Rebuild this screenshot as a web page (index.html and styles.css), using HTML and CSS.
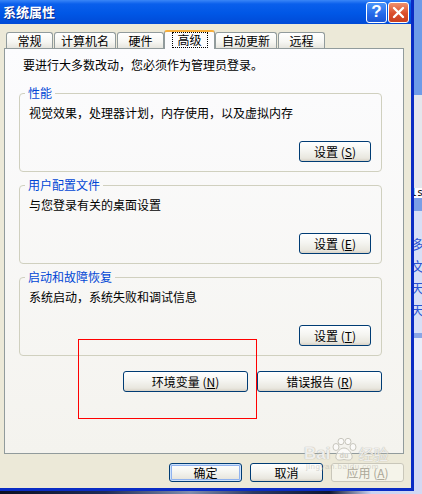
FILE: index.html
```html
<!DOCTYPE html>
<html lang="zh-CN">

<head>
    <meta charset="UTF-8">
    <meta name="viewport" content="width=device-width, initial-scale=1.0">
    <title>系统属性</title>
    <link rel="stylesheet" href="styles.css">
</head>

<body>
    <div class="screen">
        <div class="window">
            <div class="titlebar">
                <span class="title">系统属性</span>
                <div class="tbBtns">
                    <span class="helpBtn">?</span>
                    <span class="closeBtn">
                        <svg width="13" height="13" viewBox="0 0 13 13">
                            <path d="M2 2 L11 11 M11 2 L2 11" stroke="#fff" stroke-width="2.4" stroke-linecap="round" fill="none"/>
                        </svg>
                    </span>
                </div>
            </div>
            <div class="client">
                <div class="tabs">
                    <div class="tab">常规</div>
                    <div class="tab">计算机名</div>
                    <div class="tab">硬件</div>
                    <div class="tab active"><span class="focus">高级</span></div>
                    <div class="tab">自动更新</div>
                    <div class="tab">远程</div>
                </div>
                <div class="panel">
                    <p class="note">要进行大多数改动，您必须作为管理员登录。</p>
                    <fieldset class="group">
                        <legend>性能</legend>
                        <p>视觉效果，处理器计划，内存使用，以及虚拟内存</p>
                        <div class="groupBtn"><button class="btn">设置 (<u>S</u>)</button></div>
                    </fieldset>
                    <fieldset class="group">
                        <legend>用户配置文件</legend>
                        <p>与您登录有关的桌面设置</p>
                        <div class="groupBtn"><button class="btn">设置 (<u>E</u>)</button></div>
                    </fieldset>
                    <fieldset class="group">
                        <legend>启动和故障恢复</legend>
                        <p>系统启动，系统失败和调试信息</p>
                        <div class="groupBtn"><button class="btn">设置 (<u>T</u>)</button></div>
                    </fieldset>
                    <div class="rowBtns">
                        <button class="btn wide">环境变量 (<u>N</u>)</button>
                        <button class="btn wide">错误报告 (<u>R</u>)</button>
                    </div>
                </div>
                <div class="dlgBtns">
                    <button class="btn dlg default">确定</button>
                    <button class="btn dlg">取消</button>
                    <button class="btn dlg disabled">应用 (<u>A</u>)</button>
                </div>
                <div class="mark"></div>
                <div class="wm">
                    <div class="wmTop">
                        <span class="wmBai">Bai</span>
                        <svg width="26" height="24" viewBox="0 0 26 24">
                            <g fill="rgba(255,255,255,0.6)" stroke="#c8c6bd" stroke-width="1">
                                <ellipse cx="5" cy="9" rx="3" ry="3.5"/>
                                <ellipse cx="10" cy="3.5" rx="3" ry="3.2"/>
                                <ellipse cx="17" cy="3.5" rx="3" ry="3.2"/>
                                <ellipse cx="22" cy="9" rx="3" ry="3.5"/>
                                <path d="M13 10 C8 10 4 17 5 20 C6 23 10 22 13 21.5 C16 22 20 23 21 20 C22 17 18 10 13 10 Z"/>
                            </g>
                            <text x="13" y="20" font-size="7" font-weight="bold" text-anchor="middle" fill="#d0cec5">du</text>
                        </svg>
                        <span class="wmJy">经验</span>
                    </div>
                    <div class="wmUrl">jingyan.baidu.com</div>
                </div>
            </div>
        </div>
        <div class="desk">
            <div class="d1"></div>
            <div class="d2"></div>
            <div class="d3">ls</div>
            <div class="d4"></div>
            <div class="d5">
                <span>多</span>
                <span>文</span>
                <span>天</span>
                <span>天</span>
            </div>
            <div class="d6"></div>
            <div class="d7"></div>
            <div class="d8"></div>
        </div>
    </div>
    <div class="taskbar"></div>
</body>

</html>
```

FILE: styles.css
```css
* {
    margin: 0;
    padding: 0;
    box-sizing: border-box;
}

body {
    width: 422px;
    height: 494px;
    overflow: hidden;
    font-family: "Noto Sans CJK SC", "Liberation Sans", sans-serif;
    font-size: 12px;
    color: #000;
    background: #D3D9F3;
}

.screen {
    display: flex;
    height: 491px;
}

.window {
    width: 414px;
    display: flex;
    flex-direction: column;
    border-right: 3px solid #0A2CC4;
    border-bottom: 3px solid #0A2CC4;
}

/* title bar */
.titlebar {
    height: 24px;
    display: flex;
    align-items: center;
    justify-content: space-between;
    padding: 0 2px 0 3px;
    background: linear-gradient(#3A86F7 0, #0A5FEC 4px, #0057E6 55%, #004AD6 100%);
}

.title {
    color: #fff;
    font-weight: bold;
    font-size: 13px;
    line-height: 16px;
    text-shadow: 1px 1px 0 #0A2A8C;
}

.tbBtns {
    display: flex;
    gap: 1px;
}

.helpBtn,
.closeBtn {
    width: 21px;
    height: 21px;
    border: 1px solid #fff;
    border-radius: 3px;
    display: flex;
    align-items: center;
    justify-content: center;
    color: #fff;
}

.helpBtn {
    background: linear-gradient(#4C95FA, #2468E8 60%, #1B56D6);
    font-family: "Liberation Sans", sans-serif;
    font-weight: bold;
    font-size: 17px;
}

.closeBtn {
    background: linear-gradient(#EE916F, #DB4E2C 55%, #C93E1F);
}

/* dialog body */
.client {
    flex: 1;
    position: relative;
    background: #ECE9D8;
    padding: 6px 7px 0 4px;
}

.tabs {
    display: flex;
    align-items: flex-end;
    gap: 1px;
    height: 18px;
    padding-left: 2px;
}

.tab {
    height: 16px;
    min-width: 47px;
    padding: 0 6px;
    border: 1px solid #919B9C;
    border-bottom: 0;
    border-radius: 3px 3px 0 0;
    background: linear-gradient(#FFFFFF, #F6F6F2 60%, #E6E5DE);
    line-height: 15px;
    text-align: center;
}

.tab.active {
    height: 19px;
    min-width: 51px;
    margin: 0 -1px -1px;
    padding: 0 2px;
    border-top: 2px solid #F7AE3A;
    background: #FCFCFE;
    position: relative;
    z-index: 1;
}

.focus {
    display: inline-block;
    margin-top: 1px;
    padding: 0 5px;
    line-height: 14px;
    outline: 1px dotted #000;
}

.panel {
    height: 406px;
    border: 1px solid #919B9C;
    background: linear-gradient(#FCFCFE, #F4F3EE);
}

.note {
    padding: 9px 0 0 18px;
    line-height: 14px;
}

.group {
    width: 363px;
    margin: 6px 0 0 14px;
    padding: 6px 10px 9px 9px;
    border: 1px solid #D0D0BF;
    border-radius: 4px;
}

.group:first-of-type {
    margin-top: 14px;
}

.group legend {
    margin-left: -4px;
    padding: 0 3px;
    line-height: 14px;
    color: #0046D5;
}

.group p {
    line-height: 14px;
}

.groupBtn {
    display: flex;
    justify-content: flex-end;
    margin-top: 21px;
}

.btn {
    width: 72px;
    height: 21px;
    border: 1px solid #003C74;
    border-radius: 3px;
    background: linear-gradient(#FFFFFF, #F5F5F1 45%, #E9E7DF 85%, #D8D2C6);
    font-family: inherit;
    font-size: 12px;
    line-height: 19px;
    color: #000;
    text-align: center;
}

.btn u {
    text-underline-offset: 1px;
}

.rowBtns {
    display: flex;
    justify-content: flex-end;
    gap: 9px;
    width: 363px;
    margin: 15px 0 0 14px;
}

.btn.wide {
    width: 125px;
}

.dlgBtns {
    display: flex;
    justify-content: flex-end;
    gap: 8px;
    margin-top: 9px;
}

.btn.dlg {
    width: 73px;
    height: 19px;
    line-height: 17px;
}

.btn.default {
    box-shadow: inset 0 0 0 1px #CDE2FC, inset 0 0 0 2px #90B2EE;
}

.btn.disabled {
    border-color: #C9C7BA;
    background: #F5F4EA;
    color: #ACA899;
}

/* red annotation box */
.mark {
    position: absolute;
    left: 78px;
    top: 315px;
    width: 179px;
    height: 80px;
    border: 1px solid #F00;
}

/* baidu watermark */
.wm {
    position: absolute;
    left: 304px;
    top: 414px;
    color: rgba(255, 255, 255, 0.75);
}

.wmTop {
    display: flex;
    align-items: flex-end;
    gap: 1px;
}

.wmBai {
    font-family: "Liberation Sans", sans-serif;
    font-weight: bold;
    font-size: 17px;
    line-height: 17px;
    text-shadow: 0 0 1px #BDBBB2, 0 0 1px #BDBBB2;
}

.wmJy {
    font-size: 15px;
    line-height: 16px;
    text-shadow: 0 0 1px #BDBBB2, 0 0 1px #BDBBB2;
}

.wmUrl {
    font-family: "Liberation Sans", sans-serif;
    font-size: 8px;
    line-height: 10px;
    margin-left: 2px;
    color: rgba(190, 188, 180, 0.6);
    letter-spacing: 0.5px;
}

/* desktop strip at the right */
.desk {
    width: 8px;
    display: flex;
    flex-direction: column;
    overflow: hidden;
}

.d1 {
    height: 95px;
    background: #6E9BE8;
}

.d2 {
    height: 93px;
    background: #E4E6EC;
}

.d3 {
    height: 10px;
    background: #fff;
    font-family: "DejaVu Sans Mono", monospace;
    font-size: 10px;
    line-height: 10px;
    text-indent: -3px;
    white-space: nowrap;
}

.d4 {
    height: 13px;
    background: #7B9FE6;
}

.d5 {
    height: 122px;
    background: #D7DFF6;
    display: flex;
    flex-direction: column;
    padding-top: 26px;
    gap: 9px;
    color: #2D55D0;
    font-size: 13px;
    line-height: 13px;
    text-indent: -3px;
    white-space: nowrap;
}

.d6 {
    height: 5px;
    background: #8AA6E6;
}

.d7 {
    height: 32px;
    background: #E9EDF9;
}

.d8 {
    flex: 1;
    background: #D3D9F3;
}

.taskbar {
    height: 3px;
    background: linear-gradient(to right, #0B0F22 0, #1E2C58 25%, #7F8DAE 45%, #2B3A66 60%, #0D1633 78%, #C9D2F2 88%, #D3D9F3 100%);
}
```
